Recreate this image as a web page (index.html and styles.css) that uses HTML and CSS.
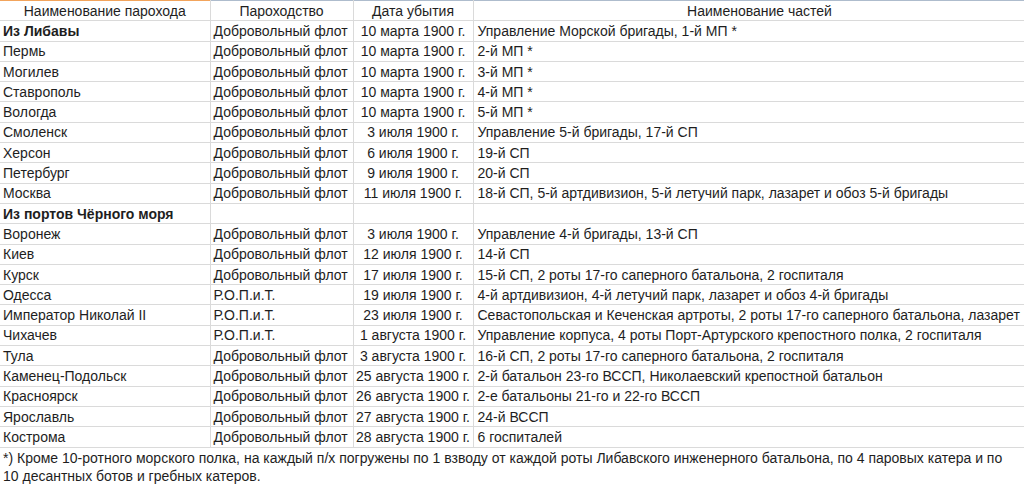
FILE: index.html
```html
<!DOCTYPE html>
<html lang="ru">
<head>
<meta charset="utf-8">
<title>Пароходы</title>
<link rel="stylesheet" href="styles.css">
</head>
<body>
<div class="sheet">
<table class="grid">
  <colgroup>
    <col class="c-ship"><col class="c-co"><col class="c-date"><col class="c-units">
  </colgroup>
  <thead>
    <tr>
      <th class="h-first">Наименование парохода</th>
      <th>Пароходство</th>
      <th>Дата убытия</th>
      <th>Наименование частей</th>
    </tr>
  </thead>
  <tbody>
    <tr class="group"><td>Из Либавы</td><td class="co">Добровольный флот</td><td class="date">10 марта 1900 г.</td><td>Управление Морской бригады, 1-й МП *</td></tr>
    <tr><td>Пермь</td><td class="co">Добровольный флот</td><td class="date">10 марта 1900 г.</td><td>2-й МП *</td></tr>
    <tr><td>Могилев</td><td class="co">Добровольный флот</td><td class="date">10 марта 1900 г.</td><td>3-й МП *</td></tr>
    <tr><td>Ставрополь</td><td class="co">Добровольный флот</td><td class="date">10 марта 1900 г.</td><td>4-й МП *</td></tr>
    <tr><td>Вологда</td><td class="co">Добровольный флот</td><td class="date">10 марта 1900 г.</td><td>5-й МП *</td></tr>
    <tr><td>Смоленск</td><td class="co">Добровольный флот</td><td class="date">3 июля 1900 г.</td><td>Управление 5-й бригады, 17-й СП</td></tr>
    <tr><td>Херсон</td><td class="co">Добровольный флот</td><td class="date">6 июля 1900 г.</td><td>19-й СП</td></tr>
    <tr><td>Петербург</td><td class="co">Добровольный флот</td><td class="date">9 июля 1900 г.</td><td>20-й СП</td></tr>
    <tr><td>Москва</td><td class="co">Добровольный флот</td><td class="date">11 июля 1900 г.</td><td>18-й СП, 5-й артдивизион, 5-й летучий парк, лазарет и обоз 5-й бригады</td></tr>
    <tr class="group"><td>Из портов Чёрного моря</td><td></td><td></td><td></td></tr>
    <tr><td>Воронеж</td><td class="co">Добровольный флот</td><td class="date">3 июля 1900 г.</td><td>Управление 4-й бригады, 13-й СП</td></tr>
    <tr><td>Киев</td><td class="co">Добровольный флот</td><td class="date">12 июля 1900 г.</td><td>14-й СП</td></tr>
    <tr><td>Курск</td><td class="co">Добровольный флот</td><td class="date">17 июля 1900 г.</td><td>15-й СП, 2 роты 17-го саперного батальона, 2 госпиталя</td></tr>
    <tr><td>Одесса</td><td class="co">Р.О.П.и.Т.</td><td class="date">19 июля 1900 г.</td><td>4-й артдивизион, 4-й летучий парк, лазарет и обоз 4-й бригады</td></tr>
    <tr><td>Император Николай II</td><td class="co">Р.О.П.и.Т.</td><td class="date">23 июля 1900 г.</td><td>Севастопольская и Кеченская артроты, 2 роты 17-го саперного батальона, лазарет</td></tr>
    <tr><td>Чихачев</td><td class="co">Р.О.П.и.Т.</td><td class="date">1 августа 1900 г.</td><td>Управление корпуса, 4 роты Порт-Артурского крепостного полка, 2 госпиталя</td></tr>
    <tr><td>Тула</td><td class="co">Добровольный флот</td><td class="date">3 августа 1900 г.</td><td>16-й СП, 2 роты 17-го саперного батальона, 2 госпиталя</td></tr>
    <tr><td>Каменец-Подольск</td><td class="co">Добровольный флот</td><td class="date">25 августа 1900 г.</td><td>2-й батальон 23-го ВССП, Николаевский крепостной батальон</td></tr>
    <tr><td>Красноярск</td><td class="co">Добровольный флот</td><td class="date">26 августа 1900 г.</td><td>2-е батальоны 21-го и 22-го ВССП</td></tr>
    <tr><td>Ярославль</td><td class="co">Добровольный флот</td><td class="date">27 августа 1900 г.</td><td>24-й ВССП</td></tr>
    <tr><td>Кострома</td><td class="co">Добровольный флот</td><td class="date">28 августа 1900 г.</td><td>6 госпиталей</td></tr>
  </tbody>
</table>
<p class="note">*) Кроме 10-ротного морского полка, на каждый п/х погружены по 1 взводу от каждой роты Либавского инженерного батальона, по 4 паровых катера и по 10 десантных ботов и гребных катеров.</p>
</div>
</body>
</html>
```

FILE: styles.css
```css
html, body {
  margin: 0;
  padding: 0;
  background: #ffffff;
}
body {
  font-family: "Liberation Sans", Arial, sans-serif;
  font-size: 14px;
  color: #1e1e1e;
  overflow: hidden;
}
.sheet {
  width: 1024px;
  overflow: hidden;
}
.grid {
  border-collapse: collapse;
  table-layout: fixed;
  width: 1046px;
}
.c-ship { width: 210px; }
.c-co { width: 143px; }
.c-date { width: 120px; }
.c-units { width: 573px; }

.grid th,
.grid td {
  height: 20.3px;
  padding: 0 3px;
  box-sizing: border-box;
  border: 1px solid #dadada;
  white-space: nowrap;
  overflow: hidden;
  line-height: 18px;
  vertical-align: middle;
}
.grid tr > :first-child { border-left: none; }
.grid th {
  font-weight: normal;
  text-align: center;
  border-top: 1px solid #aebccd;
}
.grid th.h-first {
  border-top-color: #f2a45c;
}
.grid td { text-align: left; }
.grid td.date { text-align: center; padding: 0 1px; }
.grid td:last-child { padding-left: 4px; }
.group td:first-child { font-weight: bold; }

.note {
  margin: 0;
  width: 1010px;
  padding: 1px 0 0 3px;
  line-height: 18.5px;
}
```
